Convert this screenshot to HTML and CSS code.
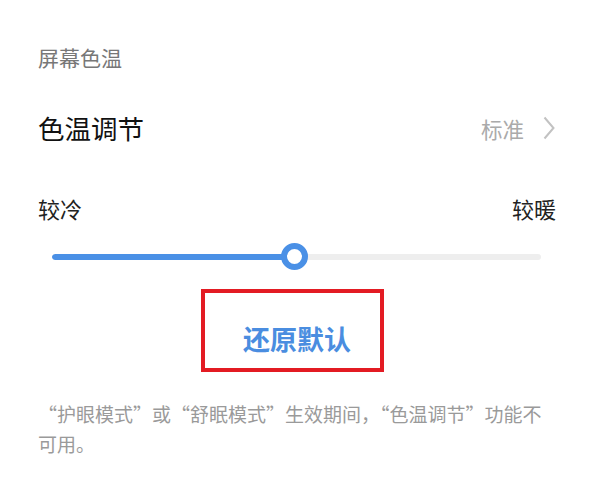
FILE: index.html
```html
<!DOCTYPE html>
<html lang="zh-CN">
<head>
  <meta charset="UTF-8">
  <meta name="viewport" content="width=device-width, initial-scale=1.0">
  <title>屏幕色温</title>
  <link rel="stylesheet" href="styles.css">
</head>
<body>

  <div class="page">
    <div class="section-title">屏幕色温</div>

    <div class="setting-row">
      <span class="setting-name">色温调节</span>
      <span class="setting-value">
        标准
        <svg class="chevron" width="12" height="24" viewBox="0 0 12 24">
          <polyline points="1.5,1.5 10.5,12 1.5,22.5" fill="none" stroke="#c2c2c2" stroke-width="2"/>
        </svg>
      </span>
    </div>

    <div class="range-labels">
      <span>较冷</span>
      <span>较暖</span>
    </div>

    <div class="slider">
      <div class="slider-track">
        <div class="slider-fill" style="width: 49.5%"></div>
      </div>
      <div class="slider-knob" style="left: 49.5%"></div>
    </div>

    <div class="reset-wrap">
      <button class="reset-btn">还原默认</button>
    </div>

    <p class="note">“护眼模式”或“舒眠模式”生效期间，“色温调节”功能不可用。</p>
  </div>

</body>
</html>
```

FILE: styles.css
```css
/* Global Reset */
* {
  margin: 0;
  padding: 0;
  box-sizing: border-box;
}

body {
  font-family: 'Noto Sans CJK SC', 'Noto Sans', sans-serif;
  background-color: #fff;
  color: #111;
  width: 600px;
  height: 491px;
  overflow: hidden;
}

.page {
  padding: 45px 44px 0 38px;
}

/* Section header */
.section-title {
  font-size: 21px;
  line-height: 24px;
  color: #777;
}

/* Setting row */
.setting-row {
  display: flex;
  justify-content: space-between;
  align-items: center;
  margin-top: 44px;
  height: 30px;
}

.setting-name {
  font-size: 26.5px;
  line-height: 30px;
  color: #111;
}

.setting-value {
  display: flex;
  align-items: center;
  gap: 19px;
  font-size: 21.5px;
  color: #aaa;
}

.chevron {
  display: block;
  margin-right: 1px;
}

/* Slider labels */
.range-labels {
  display: flex;
  justify-content: space-between;
  margin-top: 52px;
  font-size: 22px;
  line-height: 26px;
  color: #222;
}

/* Slider */
.slider {
  position: relative;
  margin: 21px 15px 0 14px;
  height: 30px;
}

.slider-track {
  position: absolute;
  top: 12px;
  left: 0;
  right: 0;
  height: 6px;
  border-radius: 3px;
  background-color: #eeeeee;
  overflow: hidden;
}

.slider-fill {
  height: 100%;
  border-radius: 3px;
  background-color: #4a90e6;
}

.slider-knob {
  position: absolute;
  top: 1px;
  width: 27px;
  height: 27px;
  margin-left: -13px;
  border-radius: 50%;
  border: 6px solid #4a90e6;
  background-color: #fff;
}

/* Reset button */
.reset-wrap {
  display: flex;
  justify-content: center;
  margin-top: 17px;
  padding-right: 10px;
}

.reset-btn {
  width: 183px;
  height: 83px;
  border: 4px solid #e31b23;
  background: #fff;
  font-family: inherit;
  font-size: 27px;
  font-weight: bold;
  color: #4a8de0;
  padding: 16px 0 0 10px;
}

/* Footnote */
.note {
  margin-top: 27px;
  font-size: 19px;
  line-height: 30px;
  color: #9a9a9a;
}
```
